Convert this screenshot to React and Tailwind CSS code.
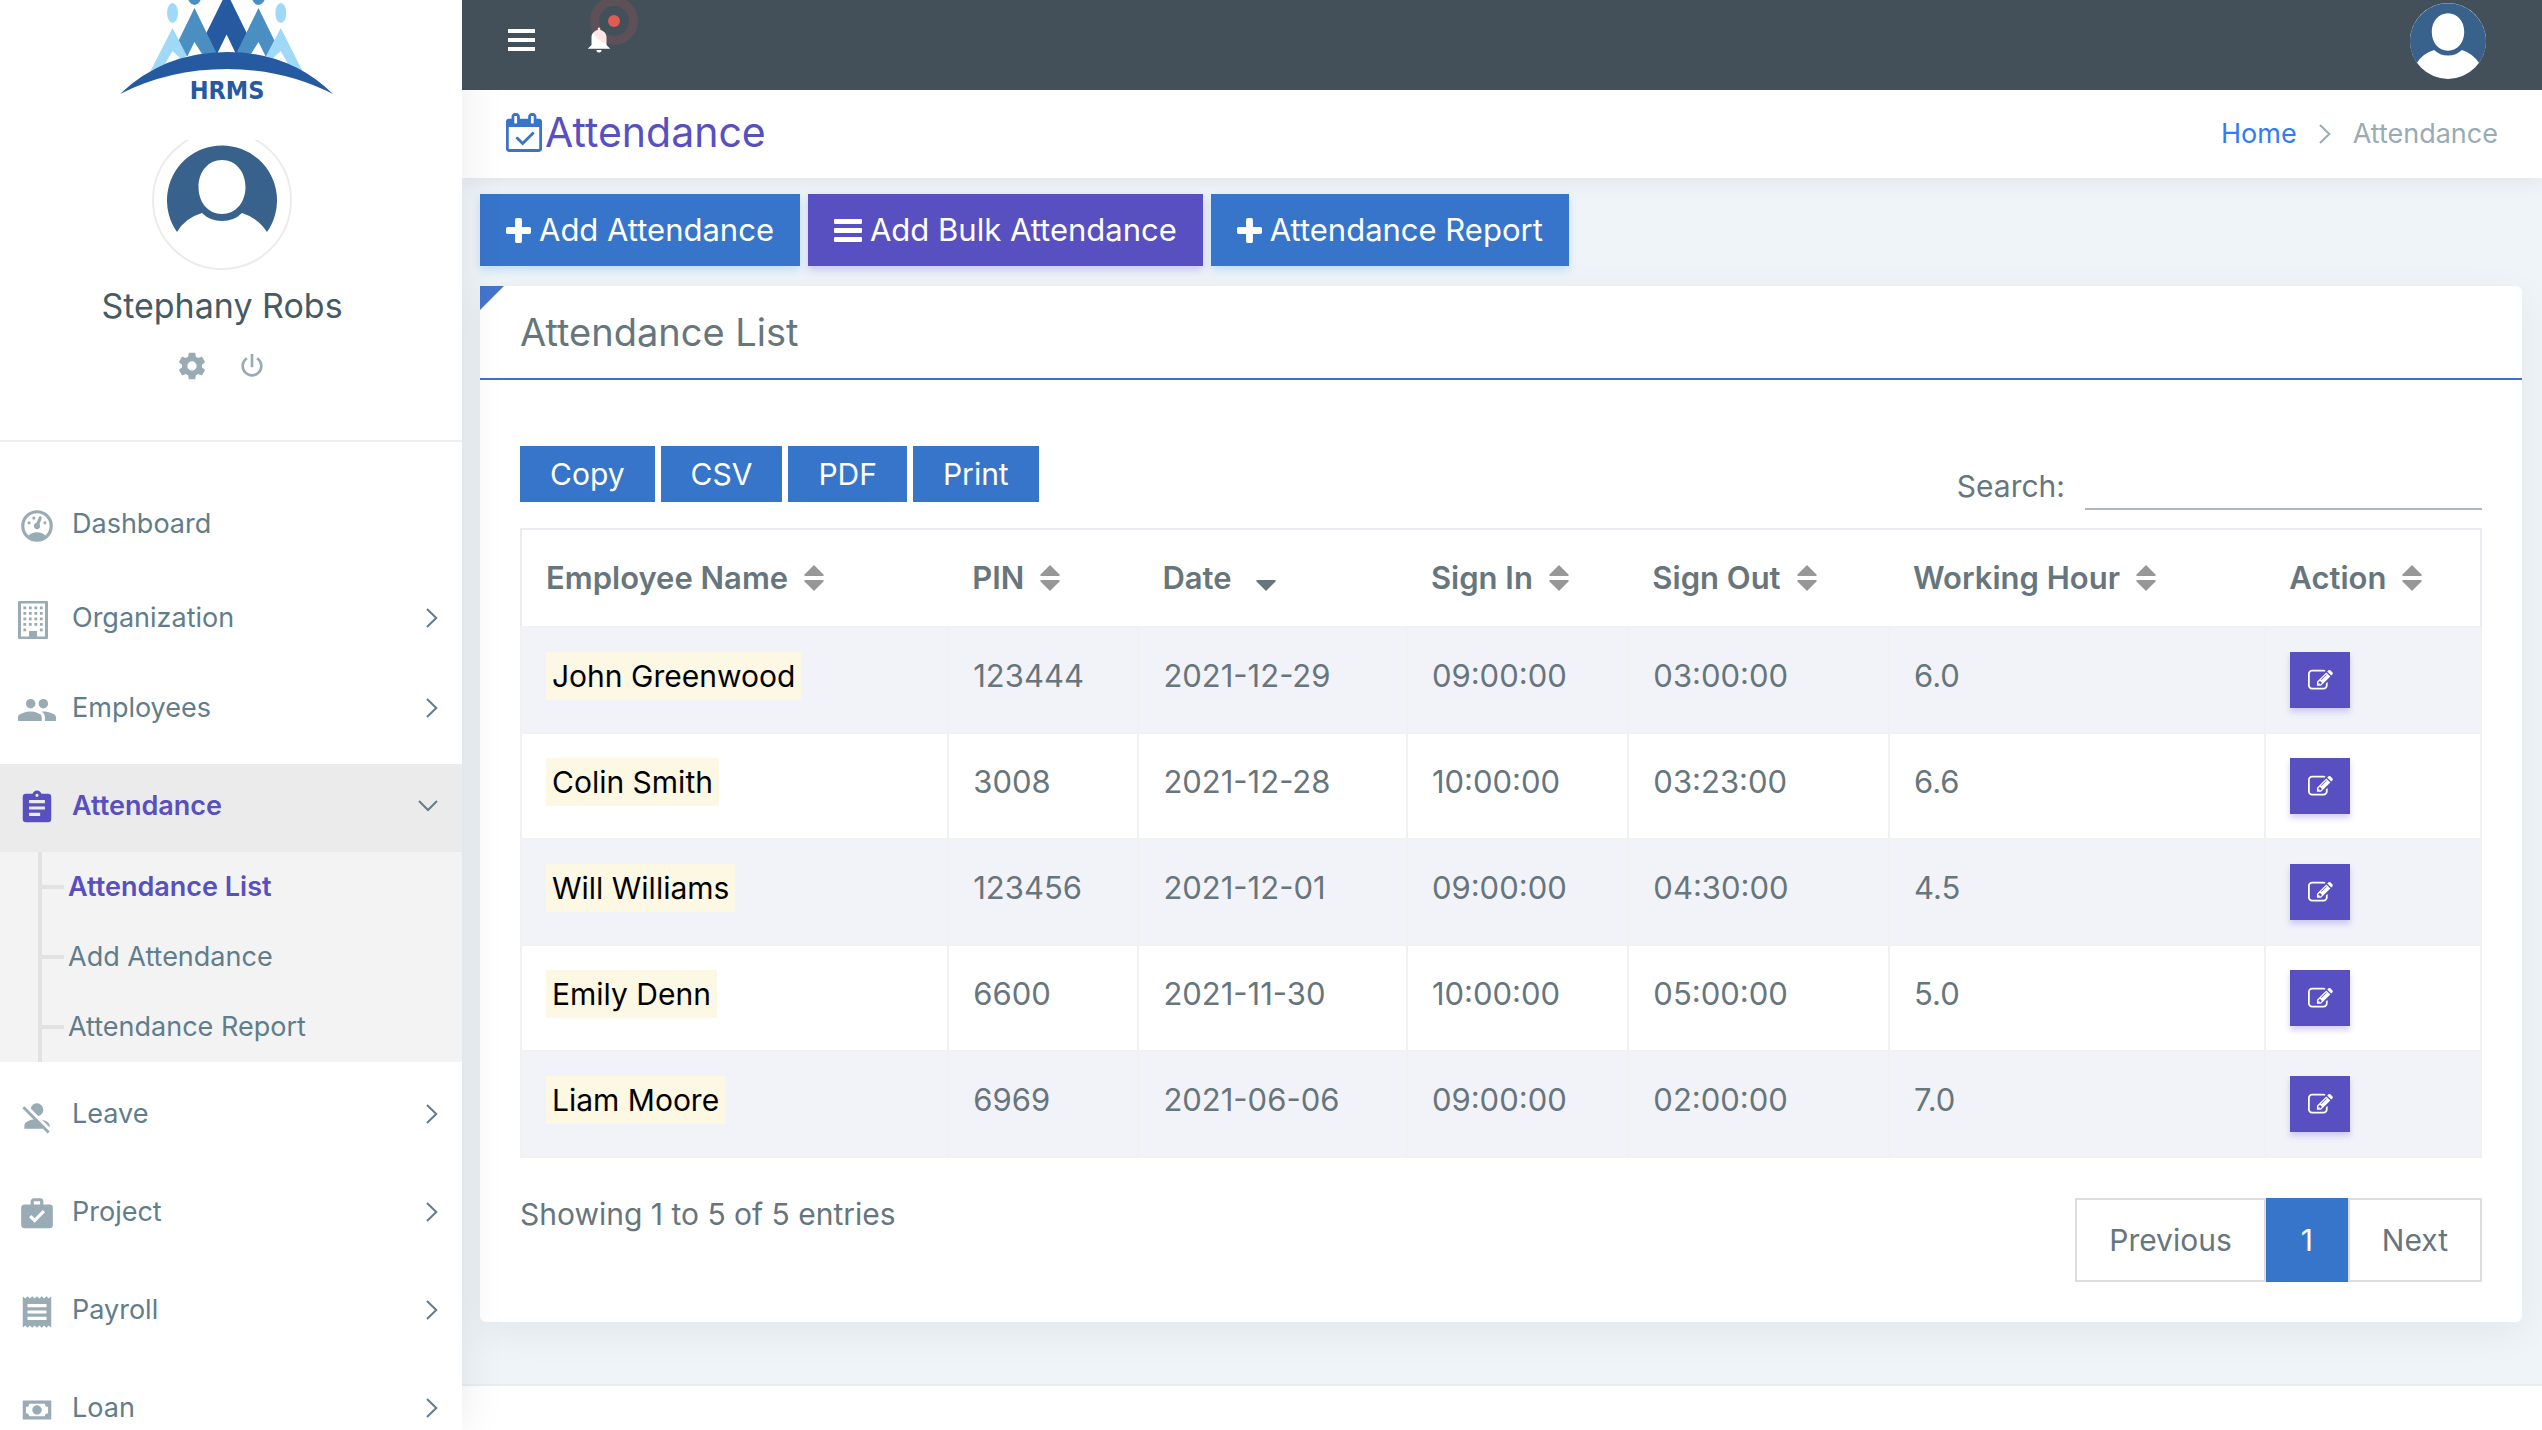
import clsx from 'clsx'

const exportButtons = ['Copy', 'CSV', 'PDF', 'Print']

const columns = [
  { label: 'Employee Name', width: 'w-[21.8%]' },
  { label: 'PIN', width: 'w-[9.7%]' },
  { label: 'Date', width: 'w-[13.7%]', sorted: true },
  { label: 'Sign In', width: 'w-[11.3%]' },
  { label: 'Sign Out', width: 'w-[13.3%]' },
  { label: 'Working Hour', width: 'w-[19.2%]' },
  { label: 'Action', width: 'w-[11%]' },
]

const records = [
  { name: 'John Greenwood', pin: '123444', date: '2021-12-29', signIn: '09:00:00', signOut: '03:00:00', hours: '6.0' },
  { name: 'Colin Smith', pin: '3008', date: '2021-12-28', signIn: '10:00:00', signOut: '03:23:00', hours: '6.6' },
  { name: 'Will Williams', pin: '123456', date: '2021-12-01', signIn: '09:00:00', signOut: '04:30:00', hours: '4.5' },
  { name: 'Emily Denn', pin: '6600', date: '2021-11-30', signIn: '10:00:00', signOut: '05:00:00', hours: '5.0' },
  { name: 'Liam Moore', pin: '6969', date: '2021-06-06', signIn: '09:00:00', signOut: '02:00:00', hours: '7.0' },
]

// 24x24 glyphs
const glyphs = {
  gauge:
    'M12,2A10,10 0 0,0 2,12A10,10 0 0,0 12,22A10,10 0 0,0 22,12A10,10 0 0,0 12,2M12,4A8,8 0 0,1 20,12C20,14.4 19,16.5 17.3,18C15.9,16.7 14,16 12,16C10,16 8.2,16.7 6.7,18C5,16.5 4,14.4 4,12A8,8 0 0,1 12,4M14,5.89C13.62,5.9 13.26,6.15 13.1,6.54L11.81,9.77L11.71,10C11,10.13 10.41,10.6 10.14,11.26C9.73,12.29 10.23,13.45 11.26,13.86C12.29,14.27 13.45,13.77 13.86,12.74C14.12,12.08 14,11.32 13.57,10.76L13.67,10.5L14.96,7.29L14.97,7.26C15.17,6.75 14.92,6.17 14.41,5.96C14.28,5.91 14.15,5.89 14,5.89M10,6A1,1 0 0,0 9,7A1,1 0 0,0 10,8A1,1 0 0,0 11,7A1,1 0 0,0 10,6M7,9A1,1 0 0,0 6,10A1,1 0 0,0 7,11A1,1 0 0,0 8,10A1,1 0 0,0 7,9M17,9A1,1 0 0,0 16,10A1,1 0 0,0 17,11A1,1 0 0,0 18,10A1,1 0 0,0 17,9Z',
  people:
    'M16,13C15.71,13 15.38,13 15.03,13.05C16.19,13.89 17,15 17,16.5V19H24V16.5C24,14.17 18.33,13 16,13M8,13C5.67,13 0,14.17 0,16.5V19H15V16.5C15,14.17 10.33,13 8,13M8,11A3,3 0 0,0 11,8A3,3 0 0,0 8,5A3,3 0 0,0 5,8A3,3 0 0,0 8,11M16,11A3,3 0 0,0 19,8A3,3 0 0,0 16,5A3,3 0 0,0 13,8A3,3 0 0,0 16,11Z',
  clipboard:
    'M14,17H7V15H14M17,13H7V11H17M17,9H7V7H17M12,3A1,1 0 0,1 13,4A1,1 0 0,1 12,5A1,1 0 0,1 11,4A1,1 0 0,1 12,3M19,3H14.82C14.4,1.84 13.3,1 12,1C10.7,1 9.6,1.84 9.18,3H5A2,2 0 0,0 3,5V19A2,2 0 0,0 5,21H19A2,2 0 0,0 21,19V5A2,2 0 0,0 19,3Z',
  personOff:
    'M12,4A4,4 0 0,1 16,8C16,9.95 14.6,11.58 12.75,11.93L8.07,7.25C8.42,5.4 10.05,4 12,4M12.28,14L18.28,20L20,21.72L18.73,23L15.73,20H4V18C4,16.16 6.5,14.61 9.87,14.14L2.78,7.05L4.05,5.78L12.28,14M20,18V19.18L15.14,14.32C18,14.93 20,16.35 20,18Z',
  briefcase:
    'M10,2H14A2,2 0 0,1 16,4V6H20A2,2 0 0,1 22,8V19A2,2 0 0,1 20,21H4C2.89,21 2,20.1 2,19V8C2,6.89 2.89,6 4,6H8V4C8,2.89 8.89,2 10,2M14,6V4H10V6H14M10.5,17.5L17.09,10.91L15.68,9.5L10.5,14.67L8.41,12.59L7,14L10.5,17.5Z',
  receipt:
    'M3,22L4.5,20.5L6,22L7.5,20.5L9,22L10.5,20.5L12,22L13.5,20.5L15,22L16.5,20.5L18,22L19.5,20.5L21,22V2L19.5,3.5L18,2L16.5,3.5L15,2L13.5,3.5L12,2L10.5,3.5L9,2L7.5,3.5L6,2L4.5,3.5L3,2M18,9H6V7H18M18,13H6V11H18M18,17H6V15H18V17Z',
  cash:
    'M3,6H21V18H3V6M12,9A3,3 0 0,1 15,12A3,3 0 0,1 12,15A3,3 0 0,1 9,12A3,3 0 0,1 12,9M7,8A2,2 0 0,1 5,10V14A2,2 0 0,1 7,16H17A2,2 0 0,1 19,14V10A2,2 0 0,1 17,8H7Z',
  settings:
    'M12,15.5A3.5,3.5 0 0,1 8.5,12A3.5,3.5 0 0,1 12,8.5A3.5,3.5 0 0,1 15.5,12A3.5,3.5 0 0,1 12,15.5M19.43,12.97C19.47,12.65 19.5,12.33 19.5,12C19.5,11.67 19.47,11.34 19.43,11L21.54,9.37C21.73,9.22 21.78,8.95 21.66,8.73L19.66,5.27C19.54,5.05 19.27,4.96 19.05,5.05L16.56,6.05C16.04,5.66 15.5,5.32 14.87,5.07L14.5,2.42C14.46,2.18 14.25,2 14,2H10C9.75,2 9.54,2.18 9.5,2.42L9.13,5.07C8.5,5.32 7.96,5.66 7.44,6.05L4.95,5.05C4.73,4.96 4.46,5.05 4.34,5.27L2.34,8.73C2.21,8.95 2.27,9.22 2.46,9.37L4.57,11C4.53,11.34 4.5,11.67 4.5,12C4.5,12.33 4.53,12.65 4.57,12.97L2.46,14.63C2.27,14.78 2.21,15.05 2.34,15.27L4.34,18.73C4.46,18.95 4.73,19.03 4.95,18.95L7.44,17.94C7.96,18.34 8.5,18.68 9.13,18.93L9.5,21.58C9.54,21.82 9.75,22 10,22H14C14.25,22 14.46,21.82 14.5,21.58L14.87,18.93C15.5,18.67 16.04,18.34 16.56,17.94L19.05,18.95C19.27,19.03 19.54,18.95 19.66,18.73L21.66,15.27C21.78,15.05 21.73,14.78 21.54,14.63L19.43,12.97Z',
  power:
    'M16.56,5.44L15.11,6.89C16.84,7.94 18,9.83 18,12A6,6 0 0,1 12,18A6,6 0 0,1 6,12C6,9.83 7.16,7.94 8.88,6.88L7.44,5.44C5.36,6.88 4,9.28 4,12A8,8 0 0,0 12,20A8,8 0 0,0 20,12C20,9.28 18.64,6.88 16.56,5.44M13,3H11V13H13',
  bell:
    'M14,20A2,2 0 0,1 12,22A2,2 0 0,1 10,20H14M12,2A1,1 0 0,1 13,3V4.08C15.84,4.56 18,7.03 18,10V16L21,19H3L6,16V10C6,7.03 8.16,4.56 11,4.08V3A1,1 0 0,1 12,2Z',
}

const menu = [
  { label: 'Dashboard', icon: 'gauge', height: 'h-[84px]' },
  { label: 'Organization', icon: 'building', height: 'h-20', arrow: true },
  { label: 'Employees', icon: 'people', height: 'h-[88px]', arrow: true },
  {
    label: 'Attendance',
    icon: 'clipboard',
    height: 'h-[88px]',
    arrow: true,
    active: true,
    children: ['Attendance List', 'Add Attendance', 'Attendance Report'],
  },
  { label: 'Leave', icon: 'personOff', height: 'h-[88px]', arrow: true },
  { label: 'Project', icon: 'briefcase', height: 'h-[88px]', arrow: true },
  { label: 'Payroll', icon: 'receipt', height: 'h-[88px]', arrow: true },
  { label: 'Loan', icon: 'cash', height: 'h-[88px]', arrow: true },
]

function Glyph({ name, size, className }) {
  return (
    <svg width={size} height={size} viewBox="0 0 24 24" fill="currentColor" fillRule="evenodd" className={className} aria-hidden="true">
      <path d={glyphs[name]} />
    </svg>
  )
}

function BuildingIcon() {
  return (
    <svg width="30" height="38" viewBox="0 0 30 38" fill="currentColor" aria-hidden="true">
      <path fillRule="evenodd" d="M1 0H29Q30 0 30 1V37Q30 38 29 38H1Q0 38 0 37V1Q0 0 1 0ZM3 2.5V35.5H11V30H19V35.5H27V2.5Z" />
      {[5.5, 11, 16.5, 22, 27.5].map(y =>
        [5.4, 10.9, 16.4, 21.9].map((x, i) =>
          y === 27.5 && (i === 1 || i === 2) ? null : <rect key={x + '-' + y} x={x} y={y} width="2.8" height="2.8" />
        )
      )}
    </svg>
  )
}

function Chevron({ down, className }) {
  return (
    <svg
      width={down ? 20 : 12}
      height={down ? 12 : 20}
      viewBox={down ? '0 0 20 12' : '0 0 12 20'}
      fill="none"
      stroke="currentColor"
      strokeWidth="2"
      className={className}
      aria-hidden="true"
    >
      <path d={down ? 'M1 1L10 10L19 1' : 'M1 1L10.3 10L1 19'} />
    </svg>
  )
}

function Logo() {
  return (
    <svg width="214" height="106" viewBox="120 0 214 106" role="img" aria-label="HRMS logo">
      <ellipse cx="194.5" cy="-5" rx="7" ry="10" fill="#4b8ec2" />
      <ellipse cx="258.5" cy="-5" rx="7" ry="10" fill="#4b8ec2" />
      <ellipse cx="172.5" cy="13" rx="5.5" ry="10" fill="#a0d9f7" />
      <ellipse cx="280.8" cy="13" rx="5.5" ry="10" fill="#a0d9f7" />
      <path d="M226.6 -8L258 56H195Z" fill="#2559a0" />
      <path d="M194.5 8L218 56H171ZM258.5 8L282 56H235Z" fill="#4b8ec2" />
      <path d="M172.5 28L150 72L187 56ZM280.8 28L303 72L266 56Z" fill="#a0d9f7" />
      <path d="M226.6 34.5L217 54H236ZM194.5 42L187 57L202 54ZM258.5 42L251 54L266 57ZM172.5 51L165 64L180 58ZM280.8 51L273 58L288 64Z" fill="#fff" />
      <path d="M120 94Q164 52 227 52Q290 52 333 94Q284 69 227 69Q169 69 120 94Z" fill="#2559a0" />
      <text x="227" y="99" textAnchor="middle" fontSize="25" fontWeight="700" fill="#2559a0" fontFamily="'DejaVu Sans Condensed', 'Liberation Sans', sans-serif">
        HRMS
      </text>
    </svg>
  )
}

// Head and shoulders in a disc
function Avatar({ size }) {
  return (
    <svg width={size} height={size} viewBox="0 0 110 110" role="img" aria-label="Stephany Robs">
      <circle cx="55" cy="55" r="55" fill="#fff" />
      <path
        fill="#38618c"
        fillRule="evenodd"
        d="M10 87A55 55 0 1 1 100 87Q91 73 75 68Q67 76 55 76Q43 76 35 68Q18 73 10 87ZM55 15C41 15 31.500 27 31.500 42C31.500 57 41 69 55 69C69 69 78.500 57 78.500 42C78.500 27 69 15 55 15Z"
      />
    </svg>
  )
}

function PlusIcon() {
  return (
    <svg width="25" height="25" viewBox="192 128 1408 1408" fill="currentColor" aria-hidden="true">
      <path d="M1600 736v192q0 40-28 68t-68 28h-416v416q0 40-28 68t-68 28h-192q-40 0-68-28t-28-68v-416h-416q-40 0-68-28t-28-68v-192q0-40 28-68t68-28h416v-416q0-40 28-68t68-28h192q40 0 68 28t28 68v416h416q40 0 68 28t28 68z" />
    </svg>
  )
}

function BarsIcon() {
  return (
    <svg width="28" height="24" viewBox="0 0 28 24" fill="currentColor" aria-hidden="true">
      <rect width="28" height="5" rx="1" y="1" />
      <rect width="28" height="5" rx="1" y="10" />
      <rect width="28" height="5" rx="1" y="19" />
    </svg>
  )
}

function CalendarCheckIcon() {
  return (
    <svg width="36" height="39" viewBox="0 0 1664 1792" fill="currentColor" aria-hidden="true">
      <path d="M1303 964l-512 512q-10 9-23 9t-23-9l-288-288q-9-10-9-23t9-22l46-46q9-9 22-9t23 9l220 220 444-444q10-9 23-9t22 9l46 46q9 9 9 22t-9 23zm-1175 700h1408v-1024h-1408v1024zm384-1216v-288q0-14-9-23t-23-9h-64q-14 0-23 9t-9 23v288q0 14 9 23t23 9h64q14 0 23-9t9-23zm768 0v-288q0-14-9-23t-23-9h-64q-14 0-23 9t-9 23v288q0 14 9 23t23 9h64q14 0 23-9t9-23zm384-64v1280q0 52-38 90t-90 38h-1408q-52 0-90-38t-38-90v-1280q0-52 38-90t90-38h128v-96q0-66 47-113t113-47h64q66 0 113 47t47 113v96h384v-96q0-66 47-113t113-47h64q66 0 113 47t47 113v96h128q52 0 90 38t38 90z" />
    </svg>
  )
}

function EditIcon() {
  return (
    <svg width="25" height="25" viewBox="0 0 1792 1792" fill="currentColor" aria-hidden="true">
      <path d="M888 1184l116-116-152-152-116 116v56h96v96h56zm440-720q-16-16-33 1l-350 350q-17 17-1 33t33-1l350-350q17-17 1-33zm80 594v190q0 119-84.5 203.5t-203.500 84.500h-832q-119 0-203.500-84.500t-84.500-203.500v-832q0-119 84.500-203.500t203.500-84.500h832q63 0 117 25 15 7 18 23 3 17-9 29l-49 49q-14 14-32 8-23-6-45-6h-832q-66 0-113 47t-47 113v832q0 66 47 113t113 47h832q66 0 113-47t47-113v-126q0-13 9-22l64-64q15-15 35-7t20 29zm-96-738l288 288-672 672h-288v-288zm444 132l-92 92-288-288 92-92q28-28 68-28t68 28l152 152q28 28 28 68t-28 68z" />
    </svg>
  )
}

function SortIcon({ sorted }) {
  return (
    <svg width="20" height="26" viewBox="0 0 20 26" aria-hidden="true" className={sorted ? 'ml-6 text-[#67757c]' : 'ml-4 text-[#979797]'}>
      {!sorted && <path d="M10 0L19.500 9.500V11H0.500V9.500Z" fill="currentColor" />}
      <path d="M10 26L19.500 16.500V15H0.500V16.500Z" fill="currentColor" />
    </svg>
  )
}

function Sidebar() {
  return (
    <aside className="relative z-10 w-[462px] shrink-0 bg-white shadow-[2px_0_40px_rgba(0,0,0,0.08)]">
      <div className="flex justify-center pr-2">
        <Logo />
      </div>

      {/* Profile */}
      <div className="flex flex-col items-center border-b-2 border-[#eeeff0] pr-[18px] pt-[34px] pb-[58px]">
        <div className="flex h-[130px] items-end overflow-hidden">
          <div className="flex size-[140px] shrink-0 items-center justify-center rounded-full border-2 border-[#ececec]">
            <Avatar size={110} />
          </div>
        </div>
        <h2 className="mt-3 text-[34px] leading-[48px] text-[#455a64]">Stephany Robs</h2>
        <div className="mt-5 flex items-center gap-7 text-[#99abb4]">
          <button type="button" aria-label="Settings">
            <Glyph name="settings" size={32} />
          </button>
          <button type="button" aria-label="Log out">
            <Glyph name="power" size={32} />
          </button>
        </div>
      </div>

      <nav className="pt-10">
        <ul className="flex flex-col gap-[10px]">
          {menu.map(item => (
            <li key={item.label}>
              <a
                href="#"
                className={clsx(
                  'flex items-start pt-[18px] pr-6 text-[27px] leading-[48px]',
                  item.height,
                  item.active ? 'bg-[#ebebeb] font-semibold text-[#584fc0]' : 'text-[#607d8b]'
                )}
              >
                <span className={clsx('flex h-[52px] w-[72px] items-center pl-[18px]', !item.active && 'text-[#99abb4]')}>
                  {item.icon === 'building' ? <BuildingIcon /> : <Glyph name={item.icon} size={38} />}
                </span>
                <span className="flex-1">{item.label}</span>
                {item.arrow && (
                  <span className="flex h-12 items-center font-normal text-[#607d8b]">
                    <Chevron down={item.active} />
                  </span>
                )}
              </a>
              {item.children && (
                <ul className="bg-[#f3f3f3] pl-[38px]">
                  {item.children.map((child, i) => (
                    <li key={child} className="border-l-4 border-[#e2e2e2]">
                      <a
                        href="#"
                        className={clsx(
                          'flex h-[70px] items-center gap-1 text-[27px]',
                          i === 0 ? 'font-semibold text-[#584fc0]' : 'text-[#607d8b]'
                        )}
                      >
                        <span className="h-1 w-[22px] bg-[#e2e2e2]" />
                        {child}
                      </a>
                    </li>
                  ))}
                </ul>
              )}
            </li>
          ))}
        </ul>
      </nav>
    </aside>
  )
}

function TopBar() {
  return (
    <header className="relative z-20 flex h-[90px] items-center justify-between bg-[#435059] pr-14 pl-[46px]">
      <div className="flex items-center gap-[49px] pb-[10px] text-white">
        <button type="button" aria-label="Toggle menu">
          <svg width="27" height="22" viewBox="0 0 27 22" fill="currentColor" aria-hidden="true">
            <path d="M0 0H27V4H0ZM0 9H27V13H0ZM0 18H27V22H0Z" />
          </svg>
        </button>
        <button type="button" aria-label="Notifications" className="relative">
          <Glyph name="bell" size={30} />
          <span className="absolute -top-7 left-[6px] flex size-12 items-center justify-center rounded-full border-[9px] border-[#ef5350]/15">
            <span className="size-3 rounded-full bg-[#e05c53]" />
          </span>
        </button>
      </div>
      <button type="button" aria-label="Account" className="pb-2">
        <Avatar size={76} />
      </button>
    </header>
  )
}

function AttendanceTable() {
  return (
    <table className="mt-[26px] w-full table-fixed border-collapse border-2 border-[#ebebf2] text-left text-[31px] leading-[48px]">
      <thead>
        <tr>
          {columns.map(col => (
            <th key={col.label} scope="col" className={clsx('p-6 font-semibold', col.width)}>
              <span className="flex items-center whitespace-nowrap">
                {col.label}
                <SortIcon sorted={col.sorted} />
              </span>
            </th>
          ))}
        </tr>
      </thead>
      <tbody>
        {records.map(r => (
          <tr key={r.name} className="align-top odd:bg-[#f2f3f8] [&>td]:border-2 [&>td]:border-[#f2f1f2] [&>td]:p-6">
            <td>
              <mark className="inline-block bg-[#fcf8e3] px-[6px] align-top text-[30px] text-black">{r.name}</mark>
            </td>
            <td>{r.pin}</td>
            <td>{r.date}</td>
            <td>{r.signIn}</td>
            <td>{r.signOut}</td>
            <td>{r.hours}</td>
            <td>
              <button
                type="button"
                aria-label={'Edit ' + r.name}
                className="flex h-14 w-[60px] items-center justify-center bg-[#584fc0] text-white shadow-[0_4px_6px_rgba(116,96,238,0.3)]"
              >
                <EditIcon />
              </button>
            </td>
          </tr>
        ))}
      </tbody>
    </table>
  )
}

export default function App() {
  return (
    <div className="flex h-screen overflow-hidden bg-[#eef4f8] font-['Inter',sans-serif] text-[#67757c]">
      <Sidebar />

      <div className="flex min-w-0 flex-1 flex-col">
        <TopBar />

        {/* Page title */}
        <div className="flex h-[88px] items-center justify-between bg-white pr-11 pl-11 shadow-[0_2px_20px_rgba(0,0,0,0.08)]">
          <h1 className="flex items-center gap-[3px] pb-1 text-[41px] leading-[48px] text-[#584fc0]">
            <span className="text-[#3775cb]">
              <CalendarCheckIcon />
            </span>
            Attendance
          </h1>
          <nav aria-label="Breadcrumb">
            <ol className="flex items-center gap-[22px] text-[27px]">
              <li>
                <a href="#" className="text-[#2f7cf6]">Home</a>
              </li>
              <li className="flex items-center gap-[22px] text-[#99abb4]">
                <Chevron />
                Attendance
              </li>
            </ol>
          </nav>
        </div>

        <main className="flex-1 px-[18px] pt-4 pr-5">
          <div className="flex gap-2 text-[31px] text-white">
            <button type="button" className="flex h-[72px] items-center gap-2 bg-[#3775cb] px-[26px] shadow-[0_4px_8px_rgba(30,136,229,0.2)]">
              <PlusIcon /> Add Attendance
            </button>
            <button type="button" className="flex h-[72px] items-center gap-2 bg-[#584fc0] px-[26px] shadow-[0_4px_8px_rgba(116,96,238,0.3)]">
              <BarsIcon /> Add Bulk Attendance
            </button>
            <button type="button" className="flex h-[72px] items-center gap-2 bg-[#3775cb] px-[26px] shadow-[0_4px_8px_rgba(30,136,229,0.2)]">
              <PlusIcon /> Attendance Report
            </button>
          </div>

          <section className="relative mt-5 rounded-[6px] bg-white shadow-[0_10px_40px_rgba(0,0,0,0.06)]">
            <svg width="24" height="24" viewBox="0 0 24 24" className="absolute top-0 left-0" aria-hidden="true">
              <path d="M0 0H24L0 24Z" fill="#4574cc" />
            </svg>
            <div className="flex h-[94px] items-center border-b-2 border-[#3775cb] px-10">
              <h2 className="text-[38px] leading-[48px]">Attendance List</h2>
            </div>

            <div className="px-10 pt-[66px] pb-10">
              <div className="flex items-start justify-between">
                <div className="flex gap-[6px]">
                  {exportButtons.map(label => (
                    <button key={label} type="button" className="h-14 bg-[#3775cb] px-[30px] text-[30px] text-white">
                      {label}
                    </button>
                  ))}
                </div>
                <div className="-mb-2 flex items-end gap-5 text-[30px]">
                  <label htmlFor="search" className="leading-[48px]">Search:</label>
                  <input id="search" type="search" className="h-16 w-[397px] border-b-2 border-[#b1b8bb] outline-none" />
                </div>
              </div>

              <AttendanceTable />

              <div className="mt-10 flex items-start justify-between text-[30px]">
                <p className="-mt-2 leading-[48px]">Showing 1 to 5 of 5 entries</p>
                <div className="flex h-[84px]">
                  <button type="button" className="border-2 border-[#ddd] px-8">Previous</button>
                  <button type="button" className="w-[82px] bg-[#3775cb] text-white">1</button>
                  <button type="button" className="border-2 border-[#ddd] px-8">Next</button>
                </div>
              </div>
            </div>
          </section>
        </main>

        <footer className="h-[46px] border-t-2 border-[#e9edf0] bg-white" />
      </div>
    </div>
  )
}
